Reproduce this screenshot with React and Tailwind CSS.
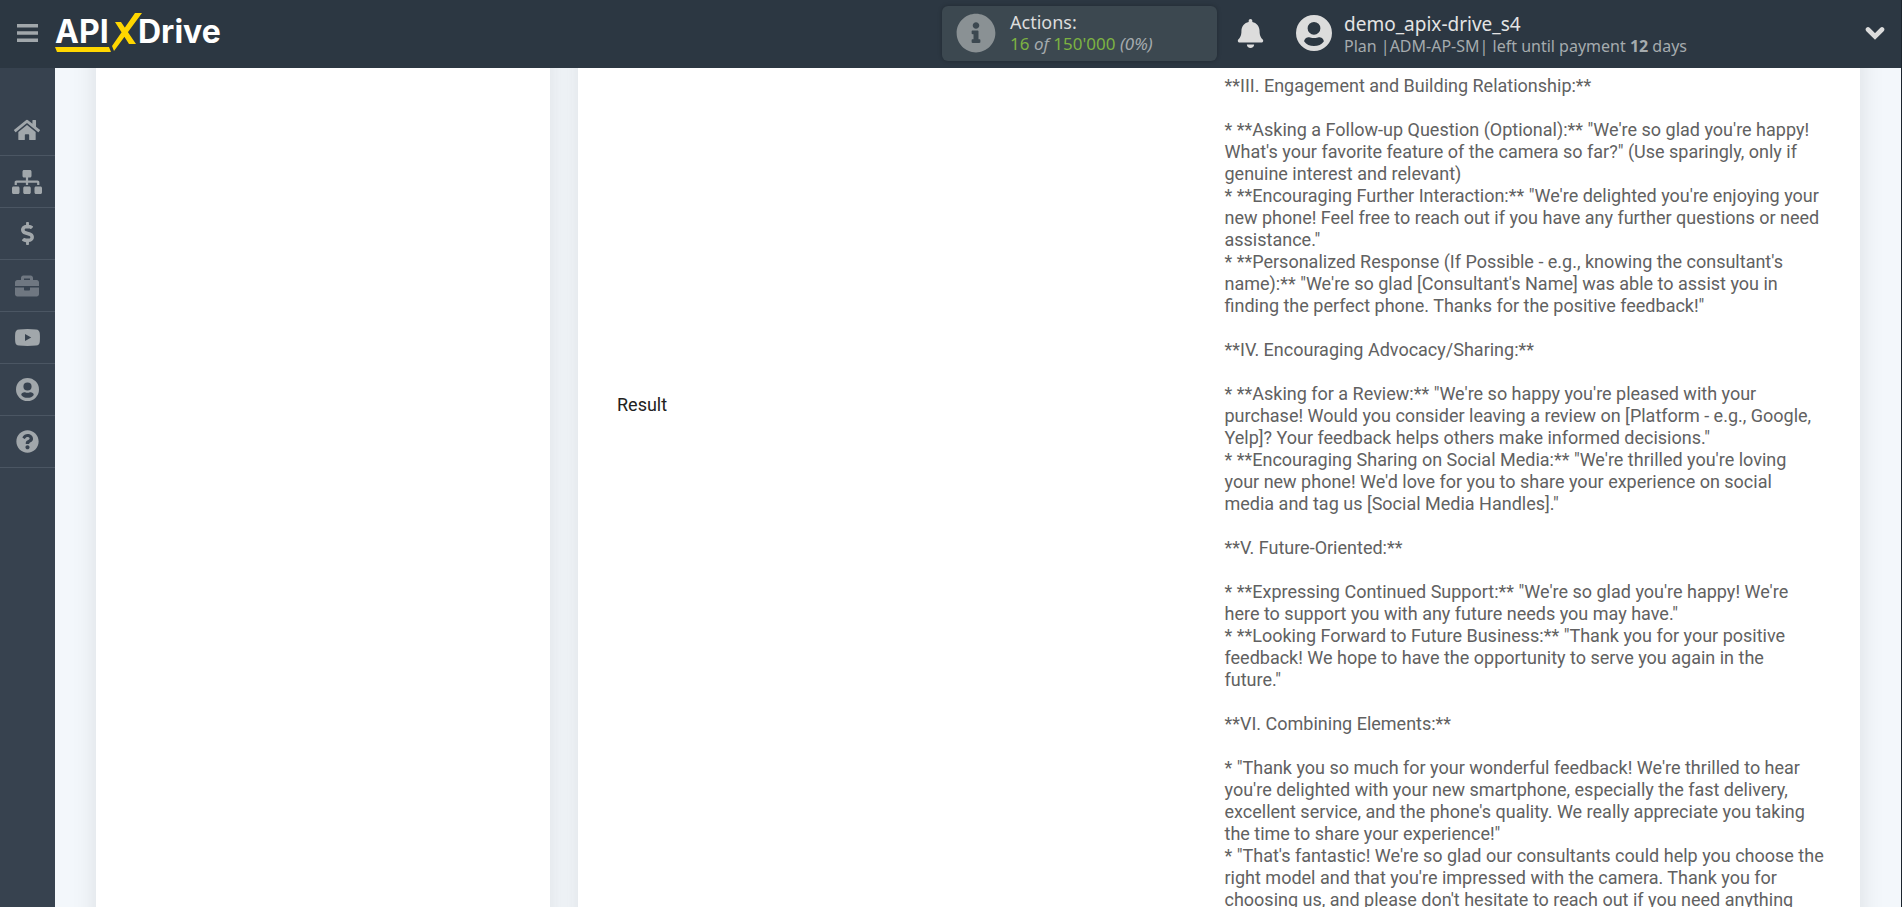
import React from 'react';
import {
    FaBriefcase,
    FaBell,
    FaDollarSign,
    FaHome,
    FaInfoCircle,
    FaQuestionCircle,
    FaSitemap,
} from 'react-icons/fa';

const MENU = [
    { label: 'Home', icon: <FaHome className="w-[26px] h-[26px]" /> },
    { label: 'Connections', icon: <FaSitemap className="w-[30px] h-6" /> },
    { label: 'Billing', icon: <FaDollarSign className="w-[23px] h-[23px]" /> },
    { label: 'Business', icon: <FaBriefcase className="w-6 h-6" />, muted: true },
    { label: 'Video', icon: <VideoIcon /> },
    { label: 'Profile', icon: <AccountIcon className="w-[23px] h-[23px]" /> },
    { label: 'Help', icon: <FaQuestionCircle className="w-[23px] h-[23px]" /> },
];

const RESULT = `**III. Engagement and Building Relationship:**

* **Asking a Follow-up Question (Optional):** "We're so glad you're happy! What's your favorite feature of the camera so far?" (Use sparingly, only if genuine interest and relevant)
* **Encouraging Further Interaction:** "We're delighted you're enjoying your new phone! Feel free to reach out if you have any further questions or need assistance."
* **Personalized Response (If Possible - e.g., knowing the consultant's name):** "We're so glad [Consultant's Name] was able to assist you in finding the perfect phone. Thanks for the positive feedback!"

**IV. Encouraging Advocacy/Sharing:**

* **Asking for a Review:** "We're so happy you're pleased with your purchase! Would you consider leaving a review on [Platform - e.g., Google, Yelp]? Your feedback helps others make informed decisions."
* **Encouraging Sharing on Social Media:** "We're thrilled you're loving your new phone! We'd love for you to share your experience on social media and tag us [Social Media Handles]."

**V. Future-Oriented:**

* **Expressing Continued Support:** "We're so glad you're happy! We're here to support you with any future needs you may have."
* **Looking Forward to Future Business:** "Thank you for your positive feedback! We hope to have the opportunity to serve you again in the future."

**VI. Combining Elements:**

* "Thank you so much for your wonderful feedback! We're thrilled to hear you're delighted with your new smartphone, especially the fast delivery, excellent service, and the phone's quality. We really appreciate you taking the time to share your experience!"
* "That's fantastic! We're so glad our consultants could help you choose the right model and that you're impressed with the camera. Thank you for choosing us, and please don't hesitate to reach out if you need anything`;

const App = () => {
    return (
        <div className="h-screen flex flex-col overflow-hidden bg-[#f3f7fb] border-r border-[#1c252e] font-['Roboto',sans-serif]">
            <Header />
            <div className="flex flex-1 min-h-0">
                <Sidebar />
                {/* cards run past the top and bottom of the scrolled area */}
                <main className="flex flex-1 min-w-0 gap-7 px-[41px] overflow-hidden">
                    <section className="-my-8 w-[454px] shrink-0 bg-white shadow-[0_0_24px_rgba(0,0,0,0.1)]" />
                    <section className="-my-8 flex-1 min-w-0 bg-white shadow-[0_0_24px_rgba(0,0,0,0.1)] pt-8 pl-[39px] pr-9">
                        <table className="w-full table-fixed text-lg leading-[22px]">
                            <tbody>
                                <tr>
                                    <th scope="row" className="w-1/2 pt-[326px] text-left align-top font-normal text-[#212121]">
                                        Result
                                    </th>
                                    <td className="w-1/2 pt-[7px] pl-1 align-top whitespace-pre-wrap text-[#616161]">{RESULT}</td>
                                </tr>
                            </tbody>
                        </table>
                    </section>
                </main>
            </div>
        </div>
    );
};

const Header = () => (
    <header className="flex items-center h-[68px] pb-0.5 shrink-0 bg-[#2c3742] font-['Noto_Sans',sans-serif]">
        <button aria-label="Menu" className="w-[55px] flex justify-center text-[#a1a7ab]">
            <svg viewBox="0 0 21 18" className="w-[21px] h-[18px]" fill="currentColor">
                <path d="M0 0h21v3.4H0zM0 7.3h21v3.4H0zM0 14.6h21V18H0z" />
            </svg>
        </button>
        <a href="#" aria-label="ApiX-Drive">
            <Logo />
        </a>

        <div className="ml-auto flex items-center w-[275px] h-[55px] pl-3.5 gap-3.5 rounded-md bg-[#3c4850] shadow-[0_0_4px_rgba(0,0,0,0.25)]">
            <FaInfoCircle className="w-10 h-10 text-[#8a9194]" />
            <div className="text-lg leading-[22px] text-[#dcdcdc]">
                <div>Actions:</div>
                <div className="text-[17px] leading-[22px] text-[#7cb342]">
                    16 <i className="text-[#a5abae]">of</i> 150'000 <i className="text-[#a5abae]">(0%)</i>
                </div>
            </div>
        </div>

        <button aria-label="Notifications" className="w-[66px] flex justify-center text-[#dcdcdc]">
            <FaBell className="w-[29px] h-[29px]" />
        </button>

        <button className="flex items-center w-[618px] pl-[13px] pr-4 text-left">
            <AccountIcon className="w-9 h-9 text-[#dcdcdc]" />
            <span className="ml-3 pt-1 flex flex-col">
                <span className="text-[19px] leading-[22px] text-[#e4e4e4]">demo_apix-drive_s4</span>
                <span className="text-base leading-[22px] text-[#a5abae]">
                    Plan |ADM-AP-SM| left until payment <b>12</b> days
                </span>
            </span>
            <svg viewBox="0 0 20 14" className="ml-auto w-5 h-3.5" fill="none" stroke="#dcdcdc" strokeWidth="4.6" strokeLinecap="round">
                <path d="M3 3.5l7 7 7-7" />
            </svg>
        </button>
    </header>
);

const Sidebar = () => (
    <nav className="w-[55px] shrink-0 pt-9 bg-[#37424f]">
        {MENU.map((item) => (
            <a
                key={item.label}
                href="#"
                aria-label={item.label}
                className={`flex items-center justify-center h-[52px] pr-px border-b border-[#4b5663] ${item.muted ? 'text-[#6f7781]' : 'text-[#a1a7ab]'}`}
            >
                {item.icon}
            </a>
        ))}
    </nav>
);

function AccountIcon({ className }) {
    return (
        <svg viewBox="0 0 36 36" className={className} fill="currentColor">
            <path
                fillRule="evenodd"
                d="M18 0a18 18 0 1 0 0 36 18 18 0 0 0 0-36zm0 6.9a6.4 6.4 0 1 1 0 12.8 6.4 6.4 0 0 1 0-12.8zM8.2 26.5c0-2.8 2.5-4.3 5-4.3 1.4 0 2.2.8 4.8.8s3.4-.8 4.8-.8c2.5 0 5 1.5 5 4.3-2.2 3-5.6 4.6-9.8 4.6s-7.6-1.6-9.8-4.6z"
            />
        </svg>
    );
}

function VideoIcon() {
    return (
        <svg viewBox="0 0 25 17" className="w-[25px] h-[17px]" fill="currentColor">
            <path
                fillRule="evenodd"
                d="M4 .4Q12.5-.3 21 .4Q24.6.7 24.8 4.5Q25.1 8.5 24.8 12.5Q24.6 16.3 21 16.6Q12.5 17.3 4 16.6Q.4 16.3.2 12.5Q-.1 8.5.2 4.5Q.4.7 4 .4zM10 5v7l6.2-3.5z"
            />
        </svg>
    );
}

const Logo = () => (
    <svg viewBox="0 0 170 42" className="w-[170px] h-[42px]" role="img">
        <g fill="#fff" fontFamily="Inter, sans-serif" fontWeight="700" fontSize="32">
            <text x="0" y="31">API</text>
            <text x="83" y="31">Drive</text>
        </g>
        <path fill="#ffd600" d="M0 35h54l2 5H2zM80 1h7L59 39l-2-5zM60 10h6l15 22h-7z" />
    </svg>
);

export default App;
